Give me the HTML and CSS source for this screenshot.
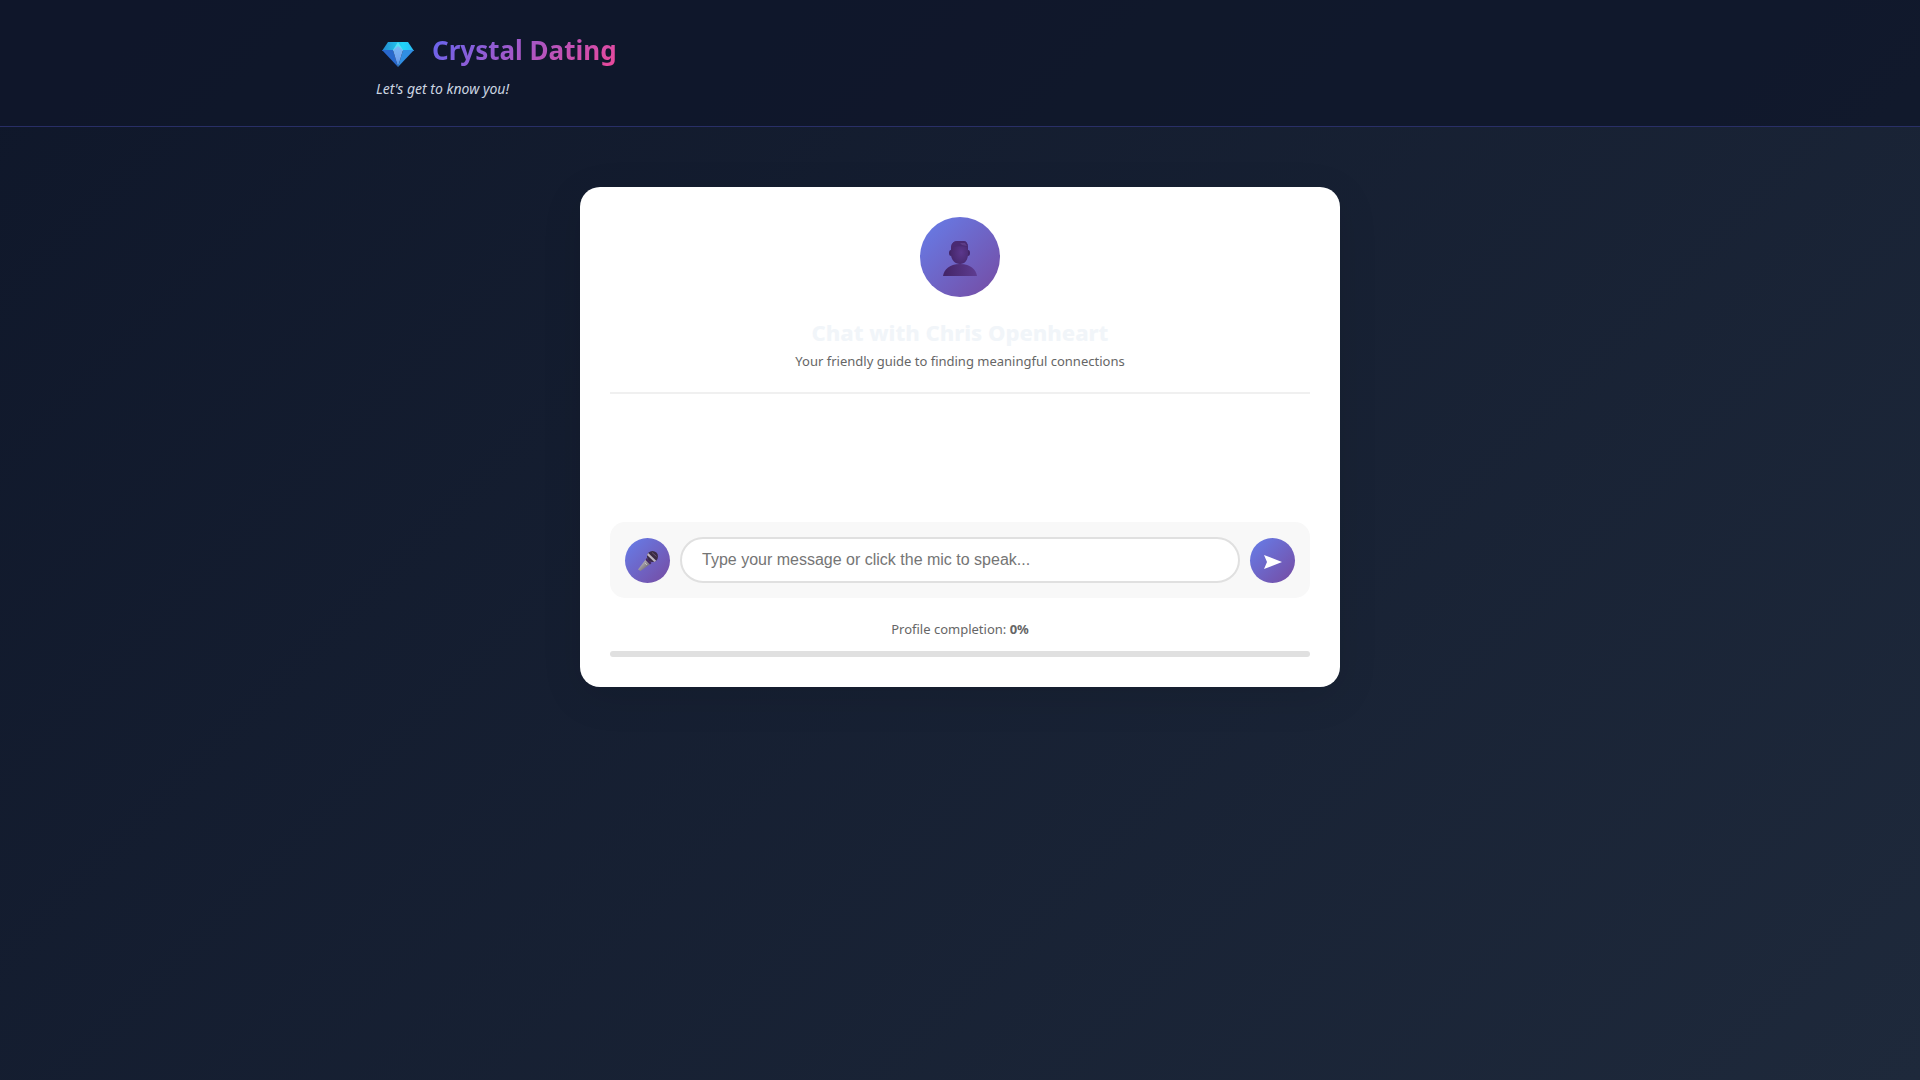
FILE: index.html
```html
<!DOCTYPE html>
<html lang="en">
<head>
<meta charset="utf-8">
<meta name="viewport" content="width=device-width, initial-scale=1">
<title>Crystal Dating</title>
<link rel="stylesheet" href="styles.css">
</head>
<body>
<header class="header">
  <div class="header-inner">
    <div class="brand">
      <svg class="gem" viewBox="0 0 32 26" aria-hidden="true">
        <defs>
          <linearGradient id="gemTop" x1="0" y1="0" x2="1" y2="0"><stop offset="0" stop-color="#2488cc"/><stop offset=".65" stop-color="#20d5f8"/><stop offset="1" stop-color="#29b9f5"/></linearGradient>
          <linearGradient id="gemMid" x1="0" y1="0" x2="0" y2="1"><stop offset="0" stop-color="#78b8f5"/><stop offset=".6" stop-color="#72a4f0"/><stop offset="1" stop-color="#3a8ae5"/></linearGradient>
        </defs>
        <path d="M6 0h20l6 9H0z" fill="url(#gemTop)"/>
        <path d="M0 8h11l5 17z" fill="#2868cd"/>
        <path d="M32 8H21l-5 17z" fill="#308ee2"/>
        <path d="M16 0l5 8H11z" fill="#55dff5"/>
        <path d="M11 8l5-4 5 4-5 17z" fill="url(#gemMid)"/>
      </svg>
      <h1 class="title">Crystal Dating</h1>
    </div>
    <p class="tagline">Let's get to know you!</p>
  </div>
</header>
<main class="main">
  <section class="card">
    <div class="intro">
      <div class="avatar">
        <svg class="person" viewBox="0 0 34 35" aria-hidden="true">
          <defs>
            <radialGradient id="skin" cx=".6" cy=".5" r=".7"><stop offset="0" stop-color="#5b378c"/><stop offset="1" stop-color="#432567"/></radialGradient>
            <linearGradient id="bust" x1="0" y1="0" x2="1" y2="0"><stop offset="0" stop-color="#432466"/><stop offset="1" stop-color="#5e3c91"/></linearGradient>
          </defs>
          <path d="M0 35c1-6 6-12 17-12s16 6 17 12z" fill="url(#bust)"/>
          <ellipse cx="8" cy="12" rx="2" ry="3" fill="#432567"/>
          <ellipse cx="25" cy="12" rx="2" ry="3" fill="#432567"/>
          <path d="M8 8c0-5 2-8 7-8h5c4 0 5 3 5 8v5c0 6-3 10-8 10s-9-4-9-10z" fill="url(#skin)"/>
          <path d="M8 9c0-6 2-9 7-9h5c4 0 5 3 5 9l-1-3c-2-1-12-1-14 0-1 1-1 2-2 3z" fill="#4a2a72"/>
          <path d="M17 2h5l2 3-5-1z" fill="#65458f" opacity=".7"/>
        </svg>
      </div>
      <h2 class="heading">Chat with Chris Openheart</h2>
      <p class="subtitle">Your friendly guide to finding meaningful connections</p>
    </div>
    <div class="messages"></div>
    <form class="composer">
      <button class="round" type="button" aria-label="Speak">
        <svg class="mic" viewBox="0 0 20 20" aria-hidden="true">
          <defs><linearGradient id="handle" x1="0" y1="0" x2="1" y2="1"><stop offset=".3" stop-color="#b7b2b6"/><stop offset=".7" stop-color="#77717b"/></linearGradient></defs>
          <path d="M8.500 7.500l4.500 5L2.500 20 0 18.500z" fill="url(#handle)"/>
          <circle cx="14.500" cy="5.500" r="5.500" fill="#3b2b45"/>
          <path d="M8.500 7l5 5-1.500 1.500L7.500 9z" fill="#44275f"/>
          <path d="M10.200 2l8 7.800-1.800 1.100L9 4z" fill="#bdb5c2"/>
          <path d="M14 1.500l4.500 4" stroke="#69566f" stroke-width="1" fill="none"/>
          <path d="M7.500 12.500l1 1" stroke="#eee" stroke-width="1"/>
        </svg>
      </button>
      <input class="field" type="text" aria-label="Message" placeholder="Type your message or click the mic to speak...">
      <button class="round" type="submit" aria-label="Send">
        <svg class="send" viewBox="0 0 18 16" aria-hidden="true"><path d="M0 1l18 7L0 15l3-7z" fill="#fff"/></svg>
      </button>
    </form>
    <div class="progress">
      <p class="progress-label">Profile completion: <strong>0%</strong></p>
      <div class="track" role="progressbar" aria-label="Profile completion" aria-valuenow="0" aria-valuemin="0" aria-valuemax="100"></div>
    </div>
  </section>
</main>
</body>
</html>
```
FILE: styles.css
```css
* { box-sizing: border-box; margin: 0; padding: 0; }

body {
  min-height: 100vh;
  background: linear-gradient(135deg, #0f172a 0%, #1e293b 100%);
  color: #f1f5f9;
  font-family: "Segoe UI", "Noto Sans", sans-serif;
  font-size: 14px;
  line-height: 20px;
}

.header {
  padding: 32px 0 24px;
  background: rgba(15, 23, 42, 0.8);
  border-bottom: 1px solid rgba(99, 102, 241, 0.3);
}

.header-inner { max-width: 1200px; margin: 0 auto; padding: 0 16px; }

.brand { display: flex; align-items: center; gap: 18px; padding-left: 6px; }
.gem { width: 32px; height: 26px; margin-top: 10px; }

.title {
  background: linear-gradient(135deg, #6366f1, #ec4899);
  background-clip: text;
  -webkit-background-clip: text;
  color: transparent;
  font-size: 26px;
  font-weight: 700;
  line-height: 36px;
}

.tagline { margin-top: 10px; padding-bottom: 2px; color: #cbd5e1; font-style: italic; line-height: 22px; }

.main { padding: 60px 20px; }

.card {
  max-width: 760px;
  margin: 0 auto;
  padding: 30px;
  background: #fff;
  border-radius: 20px;
  box-shadow: 0 10px 40px rgba(0, 0, 0, 0.1);
}

.intro { padding-bottom: 21px; border-bottom: 2px solid #f0f0f0; text-align: center; }

.avatar {
  display: flex;
  align-items: center;
  justify-content: center;
  width: 80px;
  height: 80px;
  margin: 0 auto 16px;
  background: linear-gradient(135deg, #667eea, #764ba2);
  border-radius: 50%;
}
.person { width: 34px; height: 35px; margin-top: 2px; }

.heading { font-size: 22px; font-weight: 800; line-height: 38px; }
.subtitle { color: #666; font-size: 13px; }

.messages { height: 128px; }

.composer {
  display: flex;
  align-items: center;
  gap: 10px;
  padding: 15px;
  background: #f8f8f8;
  border-radius: 15px;
}

.round {
  display: flex;
  flex: none;
  align-items: center;
  justify-content: center;
  width: 45px;
  height: 45px;
  background: linear-gradient(135deg, #667eea, #764ba2);
  border: 0;
  border-radius: 50%;
  cursor: pointer;
}
.mic { width: 20px; height: 20px; margin-top: 2px; }
.send { width: 18px; height: 16px; margin-top: 4px; }

.field {
  flex: 1;
  min-width: 0;
  height: 46px;
  padding: 0 20px;
  border: 2px solid #e0e0e0;
  border-radius: 25px;
  background: #fff;
  color: #333;
  font-family: "Liberation Sans", Arial, sans-serif;
  font-size: 16px;
  outline: none;
}
.field::placeholder { color: #757575; }

.progress { margin-top: 21px; color: #666; text-align: center; }
.progress-label { margin-bottom: 12px; font-size: 13px; }
.track { height: 6px; background: #e0e0e0; border-radius: 3px; }
```
